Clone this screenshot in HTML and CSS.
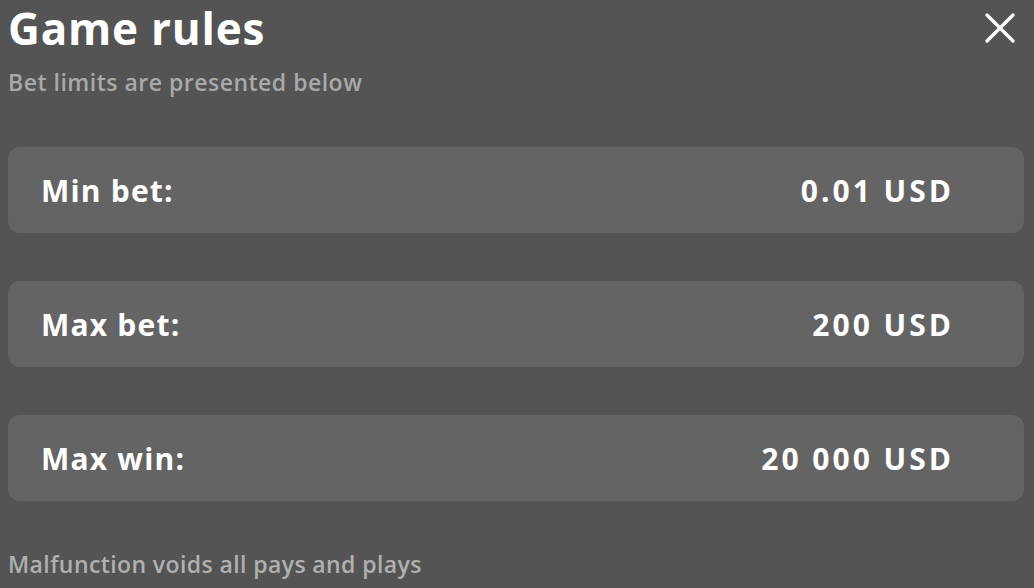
FILE: index.html
```html
<!DOCTYPE html>
<html lang="en">
<head>
    <meta charset="UTF-8">
    <title>Game rules</title>
    <link rel="stylesheet" href="styles.css">
</head>
<body>
    <div class="rules">
        <div class="rules-head">
            <div>
                <h1 class="title">Game rules</h1>
                <p class="subtitle">Bet limits are presented below</p>
            </div>
            <button class="close-btn" aria-label="Close">
                <svg width="30" height="30" viewBox="0 0 30 30">
                    <path d="M2 2 L28 28 M28 2 L2 28" stroke="#fff" stroke-width="3.2" stroke-linecap="round" fill="none"/>
                </svg>
            </button>
        </div>

        <div class="limits">
            <div class="limit-row"><span class="label">Min bet:</span><span class="value">0.01 USD</span></div>
            <div class="limit-row"><span class="label">Max bet:</span><span class="value">200 USD</span></div>
            <div class="limit-row"><span class="label">Max win:</span><span class="value">20 000 USD</span></div>
        </div>

        <p class="note">Malfunction voids all pays and plays</p>
    </div>
</body>
</html>
```

FILE: styles.css
```css
body {
    margin: 0;
    background: #545454;
    font-family: "Open Sans", Arial, sans-serif;
    color: white;
}

.rules {
    padding: 0 10px 0 8px;
}

.rules-head {
    display: flex;
    justify-content: space-between;
    align-items: flex-start;
}

.title {
    margin: 0;
    padding-top: 2px;
    font-size: 44px;
    font-weight: 700;
    line-height: 52px;
    letter-spacing: 0.8px;
}

.subtitle {
    margin: 14px 0 0;
    font-size: 23px;
    font-weight: 600;
    line-height: 28px;
    letter-spacing: 0.5px;
    color: #a9a9a9;
}

.close-btn {
    margin: 13px 9px 0 0;
    padding: 0;
    background: none;
    border: none;
    cursor: pointer;
}

.limits {
    display: flex;
    flex-direction: column;
    gap: 48px;
    margin-top: 51px;
}

.limit-row {
    display: flex;
    justify-content: space-between;
    align-items: center;
    height: 86px;
    padding: 0 70px 0 33px;
    background: #646464;
    border-radius: 12px;
    font-size: 30px;
    font-weight: 700;
}

.label {
    letter-spacing: 1.2px;
}

.value {
    letter-spacing: 3px;
}

.note {
    margin: 47px 0 0;
    font-size: 23px;
    font-weight: 600;
    letter-spacing: 0.4px;
    color: #b0b0b0;
}
```
